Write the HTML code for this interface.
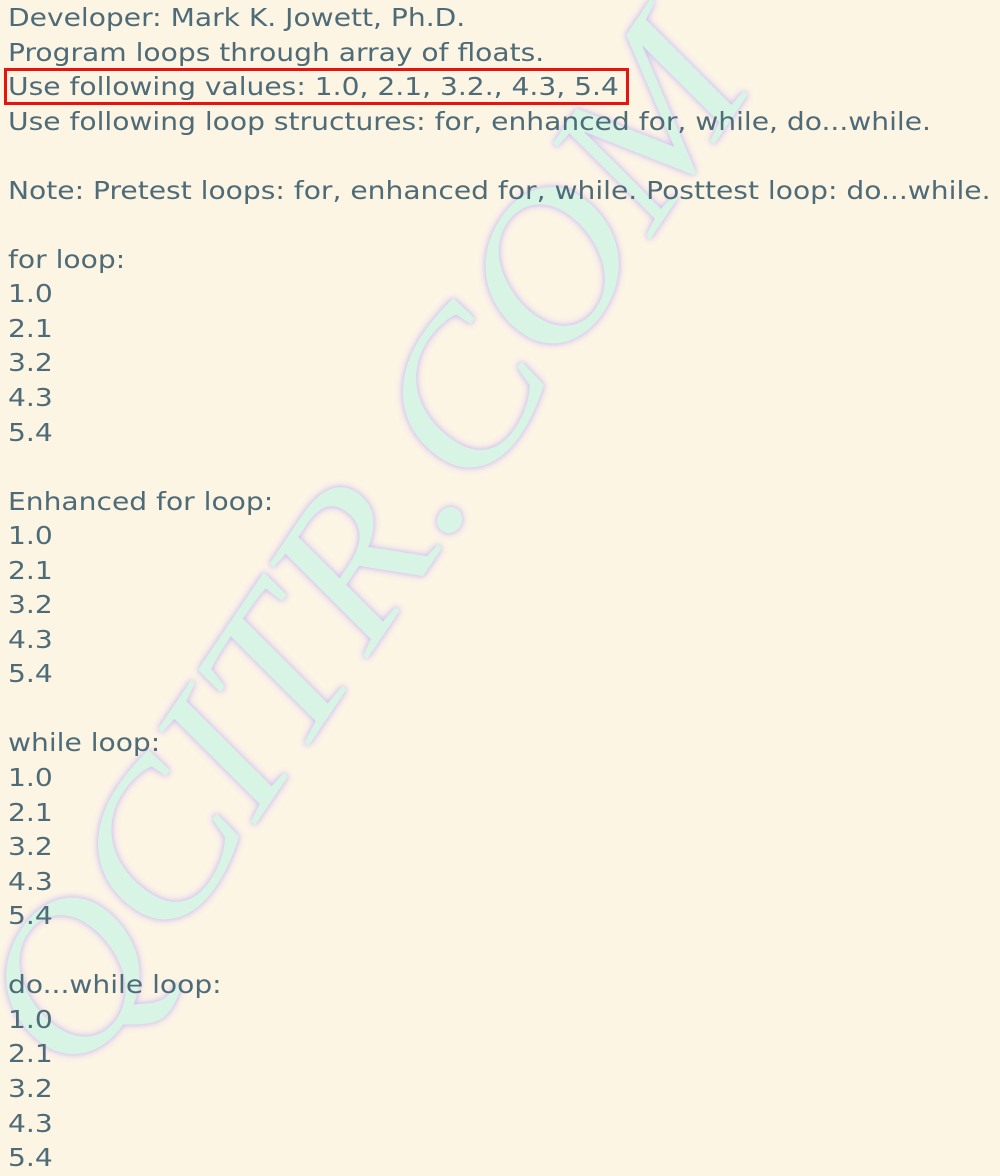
<!DOCTYPE html>
<html><head><meta charset="utf-8"><style>
html,body{margin:0;padding:0;background:#fdf5e4;width:1000px;height:1176px;overflow:hidden;position:relative}
.t{position:absolute;left:8px;top:1px;font-family:"DejaVu Sans","Liberation Sans",sans-serif;font-size:25px;line-height:34.55px;color:#4e6b78;white-space:pre;transform:scaleX(1.125);transform-origin:0 0}
.box{position:absolute;left:4px;top:68px;width:619px;height:31px;border:3px solid #e8120f}
.wm{position:absolute;left:362px;top:545px;transform:translate(-50%,-50%) rotate(-56deg) scaleX(1.1);font-family:"Liberation Serif",serif;font-style:italic;font-size:205px;color:#d6f4e6;text-shadow:0 0 5px #cbbcef,0 0 9px #dacaf2;white-space:nowrap;opacity:.95}
</style></head><body>
<div class="wm">QCITR.COM</div>
<div class="t">Developer: Mark K. Jowett, Ph.D.
Program loops through array of floats.
Use following values: 1.0, 2.1, 3.2., 4.3, 5.4
Use following loop structures: for, enhanced for, while, do...while.

Note: Pretest loops: for, enhanced for, while. Posttest loop: do...while.

for loop:
1.0
2.1
3.2
4.3
5.4

Enhanced for loop:
1.0
2.1
3.2
4.3
5.4

while loop:
1.0
2.1
3.2
4.3
5.4

do...while loop:
1.0
2.1
3.2
4.3
5.4</div>
<div class="box"></div>
</body></html>
